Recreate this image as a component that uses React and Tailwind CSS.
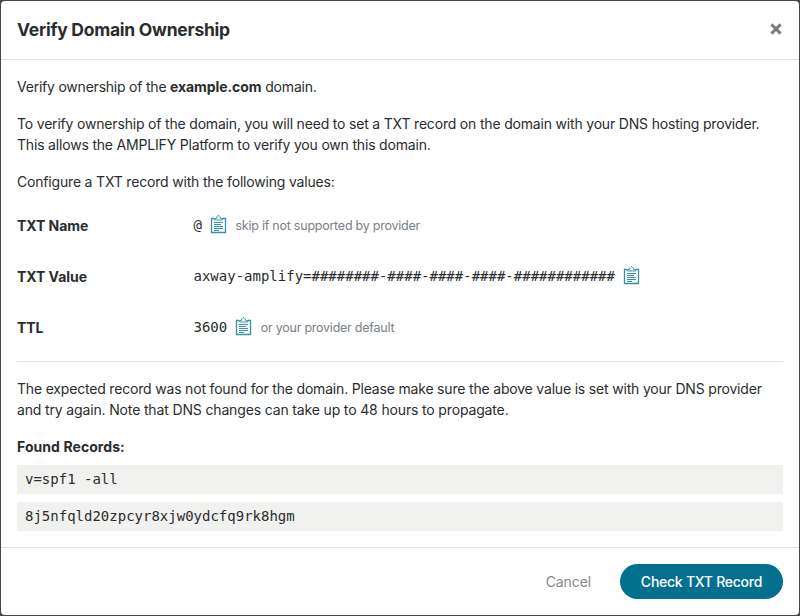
function ClipboardIcon() {
  return (
    <svg width="17" height="19" viewBox="0 0 17 19" fill="none" stroke="#3591aa" className="shrink-0">
      <path d="M4 3.5H1.5V17.5H15.5V3.5H13" strokeWidth="1.3" />
      <path d="M4.5 5V3.5H6.3L7 1.6L8 0.6H9L10 1.6L10.7 3.5H12.5V5Z" strokeWidth="1" />
      <path d="M4 7.5H13M4 9.5H11M4 11.5H13M4 13.5H13M4 15.5H9" strokeWidth="1" />
    </svg>
  );
}

function RecordField({ label, value, hint }) {
  return (
    <div className="flex h-[51px] items-center">
      <div className="w-[176.5px] shrink-0 font-bold tracking-[-0.05px]">{label}</div>
      <div className="flex items-center">
        <span className="font-['DejaVu_Sans_Mono',monospace] tracking-normal">{value}</span>
        <span className="ml-2 -mt-[2px]">
          <ClipboardIcon />
        </span>
        {hint && <span className="ml-[8.5px] text-[12.5px] tracking-[-0.24px] text-[#7b8085]">{hint}</span>}
      </div>
    </div>
  );
}

function FoundRecord({ children }) {
  return (
    <div className="h-[29px] bg-[#f1f1ef] px-2 font-['DejaVu_Sans_Mono',monospace] leading-[29px] tracking-normal">
      {children}
    </div>
  );
}

export default function App() {
  return (
    <div className="h-[616px] w-[800px] overflow-hidden bg-[#47474a] p-px font-[Inter,sans-serif] text-[14px] leading-[21px] tracking-[-0.185px] text-[#2a2d2e]">
      <div className="flex h-[614px] flex-col rounded-[4px] bg-white">
        <header className="flex h-[59px] shrink-0 items-center justify-between border-b border-[#e2e3e5] pr-[17px] pl-4">
          <h1 className="-mt-[2px] text-[17.5px] font-bold tracking-[-0.25px]">Verify Domain Ownership</h1>
          <svg width="12" height="12" viewBox="0 0 12 12" stroke="#7f7f7f" strokeWidth="3" className="-mt-[3px]">
            <path d="M1.4 1.4L10.6 10.6M10.6 1.4L1.4 10.6" />
          </svg>
        </header>
        <main className="h-[487px] shrink-0 px-4 pt-4">
          <p className="mb-4 whitespace-nowrap">
            <span className="tracking-[-0.22px]">Verify ownership of the </span>
            <b className="font-bold tracking-[-0.08px]">example.com</b> domain.
          </p>
          <p className="mb-4 whitespace-nowrap">
            To verify ownership of the domain, you will need to set a TXT record on the domain with your DNS hosting provider.
            <br />
            This allows the AMPLIFY Platform to verify you own this domain.
          </p>
          <p className="mb-2 whitespace-nowrap">Configure a TXT record with the following values:</p>
          <RecordField label="TXT Name" value="@" hint="skip if not supported by provider" />
          <RecordField label="TXT Value" value="axway-amplify=########-####-####-####-############" />
          <RecordField label="TTL" value="3600" hint="or your provider default" />
          <hr className="mt-[8px] mb-4 border-[#e2e3e5]" />
          <p className="mb-4 whitespace-nowrap">
            The expected record was not found for the domain. Please make sure the above value is set with your DNS provider
            <br />
            <span className="tracking-[-0.15px]">and try again. Note that DNS changes can take up to 48 hours to propagate.</span>
          </p>
          <p className="mb-2 font-bold tracking-[0.07px]">Found Records:</p>
          <div className="flex flex-col gap-2">
            <FoundRecord>v=spf1 -all</FoundRecord>
            <FoundRecord>8j5nfqld20zpcyr8xjw0ydcfq9rk8hgm</FoundRecord>
          </div>
        </main>
        <footer className="flex grow items-center justify-end border-t border-[#e2e3e5] px-4">
          <button className="mr-[29px] tracking-[-0.1px] text-[#85888b]">Cancel</button>
          <button className="h-[35px] w-[163px] rounded-full bg-[#04708f] font-medium tracking-[-0.25px] text-white">Check TXT Record</button>
        </footer>
      </div>
    </div>
  );
}
